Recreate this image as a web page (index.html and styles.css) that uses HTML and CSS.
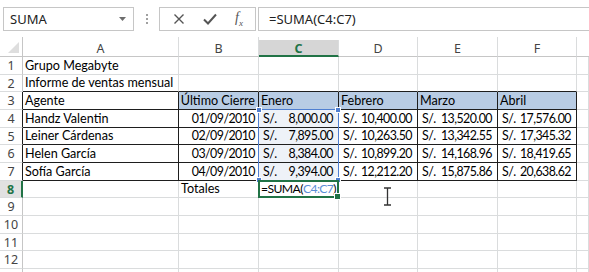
FILE: index.html
```html
<!DOCTYPE html>
<html lang="es">
<head>
    <meta charset="UTF-8">
    <meta name="viewport" content="width=device-width, initial-scale=1.0">
    <title>Informe de ventas mensual</title>
    <link rel="stylesheet" href="styles.css">
</head>
<body>
    <div class="formula-bar">
        <div class="name-box">
            <span>SUMA</span>
            <svg class="drop" width="7" height="4" viewBox="0 0 7 4"><path d="M0 0h7L3.5 4z" fill="#6d6d6d"/></svg>
        </div>
        <div class="grip"><i></i><i></i><i></i></div>
        <div class="fx-buttons">
            <svg width="12" height="12" viewBox="0 0 12 12"><path d="M1.5 1.5l9 9M10.5 1.5l-9 9" stroke="#555" stroke-width="1.4" fill="none"/></svg>
            <svg width="14" height="12" viewBox="0 0 14 12"><path d="M1 6.5l4 4L13 1.5" stroke="#555" stroke-width="2" fill="none"/></svg>
            <span class="fx"><i>f</i><sub>x</sub></span>
        </div>
        <div class="formula-input">=SUMA(C4:C7)</div>
    </div>

    <div class="sheet">
        <!-- column headers -->
        <div class="corner"></div>
        <div class="ch">A</div>
        <div class="ch">B</div>
        <div class="ch ch-active">C</div>
        <div class="ch">D</div>
        <div class="ch">E</div>
        <div class="ch">F</div>
        <div class="ch ch-last"></div>

        <!-- row 1 -->
        <div class="rh">1</div>
        <div class="c">Grupo Megabyte</div>
        <div class="c"></div><div class="c"></div><div class="c"></div><div class="c"></div><div class="c"></div><div class="c"></div>

        <!-- row 2 -->
        <div class="rh">2</div>
        <div class="c bb">Informe de ventas mensual</div>
        <div class="c bb"></div><div class="c bb"></div><div class="c bb"></div><div class="c bb"></div><div class="c bb"></div><div class="c"></div>

        <!-- row 3 -->
        <div class="rh rb">3</div>
        <div class="c t">Agente</div>
        <div class="c t hd right">Último Cierre</div>
        <div class="c t hd">Enero</div>
        <div class="c t hd">Febrero</div>
        <div class="c t hd">Marzo</div>
        <div class="c t hd">Abril</div>
        <div class="c"></div>

        <!-- row 4 -->
        <div class="rh rb">4</div>
        <div class="c t">Handz Valentin</div>
        <div class="c t right num">01/09/2010</div>
        <div class="c t money sel"><span>S/.</span><span>8,000.00</span></div>
        <div class="c t money"><span>S/.</span><span>10,400.00</span></div>
        <div class="c t money"><span>S/.</span><span>13,520.00</span></div>
        <div class="c t money"><span>S/.</span><span>17,576.00</span></div>
        <div class="c"></div>

        <!-- row 5 -->
        <div class="rh rb">5</div>
        <div class="c t">Leiner Cárdenas</div>
        <div class="c t right num">02/09/2010</div>
        <div class="c t money sel"><span>S/.</span><span>7,895.00</span></div>
        <div class="c t money"><span>S/.</span><span>10,263.50</span></div>
        <div class="c t money"><span>S/.</span><span>13,342.55</span></div>
        <div class="c t money"><span>S/.</span><span>17,345.32</span></div>
        <div class="c"></div>

        <!-- row 6 -->
        <div class="rh rb">6</div>
        <div class="c t">Helen García</div>
        <div class="c t right num">03/09/2010</div>
        <div class="c t money sel"><span>S/.</span><span>8,384.00</span></div>
        <div class="c t money"><span>S/.</span><span>10,899.20</span></div>
        <div class="c t money"><span>S/.</span><span>14,168.96</span></div>
        <div class="c t money"><span>S/.</span><span>18,419.65</span></div>
        <div class="c"></div>

        <!-- row 7 -->
        <div class="rh rb">7</div>
        <div class="c t">Sofía García</div>
        <div class="c t right num">04/09/2010</div>
        <div class="c t money sel"><span>S/.</span><span>9,394.00</span></div>
        <div class="c t money"><span>S/.</span><span>12,212.20</span></div>
        <div class="c t money"><span>S/.</span><span>15,875.86</span></div>
        <div class="c t money"><span>S/.</span><span>20,638.62</span></div>
        <div class="c"></div>

        <!-- row 8 -->
        <div class="rh rh-active">8</div>
        <div class="c"></div>
        <div class="c">Totales</div>
        <div class="c active">=SUMA(<span class="ref">C4:C7</span>)</div>
        <div class="c"></div><div class="c"></div><div class="c"></div><div class="c"></div>

        <!-- rows 9 - 13 -->
        <div class="rh">9</div>
        <div class="c"></div><div class="c"></div><div class="c"></div><div class="c"></div><div class="c"></div><div class="c"></div><div class="c"></div>
        <div class="rh">10</div>
        <div class="c"></div><div class="c"></div><div class="c"></div><div class="c"></div><div class="c"></div><div class="c"></div><div class="c"></div>
        <div class="rh">11</div>
        <div class="c"></div><div class="c"></div><div class="c"></div><div class="c"></div><div class="c"></div><div class="c"></div><div class="c"></div>
        <div class="rh">12</div>
        <div class="c"></div><div class="c"></div><div class="c"></div><div class="c"></div><div class="c"></div><div class="c"></div><div class="c"></div>
        <div class="rh">13</div>
        <div class="c"></div><div class="c"></div><div class="c"></div><div class="c"></div><div class="c"></div><div class="c"></div><div class="c"></div>

        <!-- range referenced by the formula -->
        <div class="range">
            <i class="h tl"></i><i class="h tr"></i><i class="h bl"></i><i class="h br"></i>
        </div>

        <svg class="ibeam" width="9" height="19" viewBox="0 0 9 19">
            <path d="M1 1h7M1 18h7M4.5 1v17" stroke="#333" stroke-width="1.3" fill="none"/>
        </svg>
    </div>
</body>
</html>
```

FILE: styles.css
```css
body {
    margin: 0;
    background-color: #fff;
    font-family: "Noto Sans", "Open Sans", sans-serif;
    overflow: hidden;
}

/* formula bar */
.formula-bar {
    display: flex;
    align-items: stretch;
    height: 24px;
    margin-top: 7px;
    padding-left: 3px;
    font-size: 13px;
    color: #222;
}
.name-box {
    width: 131px;
    border: 1px solid #c6c6c6;
    box-sizing: border-box;
    display: flex;
    align-items: center;
    justify-content: space-between;
    padding: 0 7px 0 6px;
}
.grip {
    width: 25px;
    display: flex;
    flex-direction: column;
    align-items: center;
    justify-content: center;
    gap: 2px;
}
.grip i {
    width: 2px;
    height: 2px;
    background-color: #a0a0a0;
}
.fx-buttons {
    width: 97px;
    border: 1px solid #c6c6c6;
    box-sizing: border-box;
    display: flex;
    align-items: center;
    justify-content: space-between;
    padding: 0 12px 0 13px;
}
.fx {
    color: #555;
    font-family: "Liberation Serif", serif;
    font-size: 14px;
}
.fx sub {
    font-size: 9px;
    font-style: italic;
}
.formula-input {
    flex: 1;
    margin-left: 2px;
    border: 1px solid #c6c6c6;
    border-right: none;
    display: flex;
    align-items: center;
    padding-left: 10px;
}

/* sheet grid */
.sheet {
    position: relative;
    display: grid;
    grid-template-columns: 23px 156px 80px 80px 79px 80px 79px 12px;
    grid-template-rows: 20px repeat(12, 17.67px) 20px;
    margin-top: 6px;
    font-family: Lato, "Liberation Sans", sans-serif;
    font-size: 12.6px;
    color: #000;
}
.corner,
.ch,
.rh,
.c {
    box-sizing: border-box;
    border-right: 1px solid #dadcdd;
    border-bottom: 1px solid #dadcdd;
    overflow: hidden;
    white-space: nowrap;
}
.corner {
    position: relative;
    border-right-color: #c6c6c6;
    border-bottom-color: #c6c6c6;
}
.corner::after {
    content: "";
    position: absolute;
    right: 3px;
    bottom: 3px;
    border-style: solid;
    border-width: 0 0 11px 11px;
    border-color: transparent transparent #dedede transparent;
}
.ch {
    font-family: "Noto Sans", sans-serif;
    font-size: 12.5px;
    color: #444;
    text-align: center;
    padding-top: 4px;
    line-height: 16px;
    border-bottom-color: #c6c6c6;
}
.ch-last {
    border-right: none;
}
.ch-active {
    margin-top: 3px;
    padding-top: 1px;
    background-color: #d6d6d6;
    color: #217346;
    font-weight: bold;
    border-bottom: 2px solid #217346;
}
.rh {
    font-family: "Noto Sans", sans-serif;
    font-size: 12.5px;
    color: #444;
    text-align: center;
    line-height: 17px;
    border-right-color: #c6c6c6;
}
.rh-active {
    background-color: #e1e1e1;
    color: #217346;
    font-weight: bold;
    border-right: 2px solid #217346;
}
.rb {
    border-right-color: #1e1e1e;
}
.c {
    display: flex;
    align-items: flex-end;
    padding: 0 3px 0 2px;
    line-height: 16px;
}
.c.bb {
    border-bottom-color: #1e1e1e;
}
.c.t {
    border-right-color: #1e1e1e;
    border-bottom-color: #1e1e1e;
}
.c.hd {
    background-color: #b8cce4;
}
.c.right {
    justify-content: flex-end;
}
.c.num,
.c.money {
    font-size: 12.4px;
    letter-spacing: -0.55px;
}
.c.money {
    justify-content: space-between;
    padding: 0 5px 0 4px;
}
.c.sel {
    background-color: #eef2f8;
}

/* active cell */
.c.active {
    position: relative;
    overflow: visible;
    z-index: 2;
    padding-left: 2px;
    font-size: 12.2px;
    letter-spacing: -0.6px;
}
.c.active::before {
    content: "";
    position: absolute;
    left: -1px;
    top: -1px;
    right: -1px;
    bottom: -1px;
    border: 2px solid #217346;
}
.c.active::after {
    content: "";
    position: absolute;
    right: -3px;
    bottom: -3px;
    width: 5px;
    height: 5px;
    background-color: #217346;
    border: 1px solid #fff;
}
.ref {
    color: #5b8fd6;
}

/* referenced range C4:C7, laid over its grid area */
.range {
    position: absolute;
    grid-column: 4 / 5;
    grid-row: 5 / 9;
    left: -1px;
    top: -1px;
    right: 0;
    bottom: 0;
    border: 1px solid #4f7fd1;
    pointer-events: none;
    z-index: 1;
}
.h {
    position: absolute;
    width: 4px;
    height: 4px;
    background-color: #4f7fd1;
    border: 1px solid #fff;
}
.tl { left: -3px; top: -3px; }
.tr { right: -3px; top: -3px; }
.bl { left: -3px; bottom: -3px; }
.br { right: -3px; bottom: -3px; }

.ibeam {
    position: absolute;
    left: 383px;
    top: 150px;
}
```
